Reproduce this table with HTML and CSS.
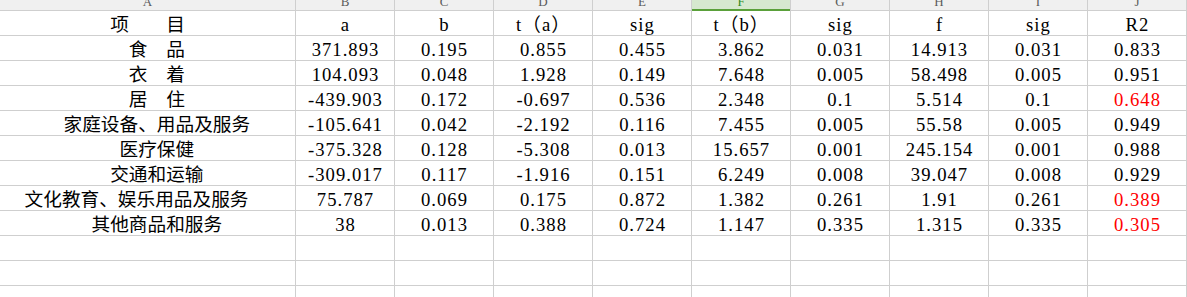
FILE: index.html
```html
<!DOCTYPE html>
<html lang="zh">
<head>
<meta charset="utf-8">
<title>Sheet</title>
<link rel="stylesheet" href="styles.css">
</head>
<body>
<div class="sheet">
  <div class="ch">A</div><div class="ch">B</div><div class="ch">C</div><div class="ch">D</div><div class="ch">E</div><div class="ch sel">F</div><div class="ch">G</div><div class="ch">H</div><div class="ch">I</div><div class="ch">J</div>

  <div class="c">项　　目</div><div class="c n">a</div><div class="c n">b</div><div class="c n">t（a）</div><div class="c n">sig</div><div class="c n">t（b）</div><div class="c n">sig</div><div class="c n">f</div><div class="c n">sig</div><div class="c n">R2</div>

  <div class="c ind">食　品</div><div class="c n">371.893</div><div class="c n">0.195</div><div class="c n">0.855</div><div class="c n">0.455</div><div class="c n">3.862</div><div class="c n">0.031</div><div class="c n">14.913</div><div class="c n">0.031</div><div class="c n">0.833</div>

  <div class="c ind">衣　着</div><div class="c n">104.093</div><div class="c n">0.048</div><div class="c n">1.928</div><div class="c n">0.149</div><div class="c n">7.648</div><div class="c n">0.005</div><div class="c n">58.498</div><div class="c n">0.005</div><div class="c n">0.951</div>

  <div class="c ind">居　住</div><div class="c n">-439.903</div><div class="c n">0.172</div><div class="c n">-0.697</div><div class="c n">0.536</div><div class="c n">2.348</div><div class="c n">0.1</div><div class="c n">5.514</div><div class="c n">0.1</div><div class="c n red">0.648</div>

  <div class="c ind">家庭设备、用品及服务</div><div class="c n">-105.641</div><div class="c n">0.042</div><div class="c n">-2.192</div><div class="c n">0.116</div><div class="c n">7.455</div><div class="c n">0.005</div><div class="c n">55.58</div><div class="c n">0.005</div><div class="c n">0.949</div>

  <div class="c ind">医疗保健</div><div class="c n">-375.328</div><div class="c n">0.128</div><div class="c n">-5.308</div><div class="c n">0.013</div><div class="c n">15.657</div><div class="c n">0.001</div><div class="c n">245.154</div><div class="c n">0.001</div><div class="c n">0.988</div>

  <div class="c ind">交通和运输</div><div class="c n">-309.017</div><div class="c n">0.117</div><div class="c n">-1.916</div><div class="c n">0.151</div><div class="c n">6.249</div><div class="c n">0.008</div><div class="c n">39.047</div><div class="c n">0.008</div><div class="c n">0.929</div>

  <div class="c rind">文化教育、娱乐用品及服务</div><div class="c n">75.787</div><div class="c n">0.069</div><div class="c n">0.175</div><div class="c n">0.872</div><div class="c n">1.382</div><div class="c n">0.261</div><div class="c n">1.91</div><div class="c n">0.261</div><div class="c n red">0.389</div>

  <div class="c ind">其他商品和服务</div><div class="c n">38</div><div class="c n">0.013</div><div class="c n">0.388</div><div class="c n">0.724</div><div class="c n">1.147</div><div class="c n">0.335</div><div class="c n">1.315</div><div class="c n">0.335</div><div class="c n red">0.305</div>

  <div class="c"></div><div class="c"></div><div class="c"></div><div class="c"></div><div class="c"></div><div class="c"></div><div class="c"></div><div class="c"></div><div class="c"></div><div class="c"></div>
  <div class="c"></div><div class="c"></div><div class="c"></div><div class="c"></div><div class="c"></div><div class="c"></div><div class="c"></div><div class="c"></div><div class="c"></div><div class="c"></div>
  <div class="c"></div><div class="c"></div><div class="c"></div><div class="c"></div><div class="c"></div><div class="c"></div><div class="c"></div><div class="c"></div><div class="c"></div><div class="c"></div>
</div>
</body>
</html>
```

FILE: styles.css
```css
html, body {
  margin: 0;
  padding: 0;
  background: #ffffff;
}

.sheet {
  width: 1187px;
  height: 297px;
  overflow: hidden;
  box-sizing: border-box;
  padding-right: 1px;
  background: #cfcfcf;
  display: grid;
  grid-template-columns: 295px repeat(9, 98px);
  grid-template-rows: 10px;
  grid-auto-rows: 24px;
  gap: 1px;
  font-family: "Liberation Serif", "Noto Sans CJK SC", serif;
  font-size: 18.67px;
  color: #000000;
}

.ch {
  background: #f0f0f0;
  color: #5a5a5a;
  font-size: 13px;
  line-height: 13px;
  overflow: hidden;
  display: flex;
  justify-content: center;
  align-items: flex-end;
  padding-bottom: 2px;
  box-sizing: border-box;
  position: relative;
}

.ch.sel {
  background: #d6e8cf;
  color: #2f8a1e;
  overflow: visible;
}

.ch.sel::after {
  content: "";
  position: absolute;
  left: 0;
  right: 0;
  bottom: -1px;
  height: 2px;
  background: #5aa03a;
}

.c {
  background: #ffffff;
  display: flex;
  justify-content: center;
  align-items: center;
  padding-top: 3px;
  box-sizing: border-box;
  white-space: nowrap;
  line-height: 20px;
}

.n {
  letter-spacing: 1px;
  padding-left: 1px;
}

.ind {
  padding-left: 18.67px;
}

.rind {
  padding-right: 22px;
}

.red {
  color: #ff0000;
}
```
